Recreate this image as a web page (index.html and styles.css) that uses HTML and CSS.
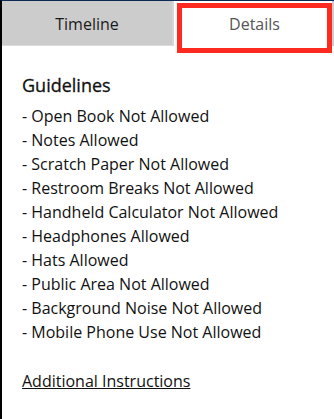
FILE: index.html
```html
<!DOCTYPE html>
<html lang="en">
<head>
    <meta charset="UTF-8">
    <meta name="viewport" content="width=device-width, initial-scale=1.0">
    <title>Exam Details</title>
    <link rel="stylesheet" href="styles.css">
</head>
<body>
    <div class="tabs">
        <div class="tab tab-timeline">Timeline</div>
        <div class="tab tab-details">Details</div>
    </div>
    <div class="details-panel">
        <h3 class="section-title">Guidelines</h3>
        <ul class="guideline-list">
            <li>- Open Book Not Allowed</li>
            <li>- Notes Allowed</li>
            <li>- Scratch Paper Not Allowed</li>
            <li>- Restroom Breaks Not Allowed</li>
            <li>- Handheld Calculator Not Allowed</li>
            <li>- Headphones Allowed</li>
            <li>- Hats Allowed</li>
            <li>- Public Area Not Allowed</li>
            <li>- Background Noise Not Allowed</li>
            <li>- Mobile Phone Use Not Allowed</li>
        </ul>
        <a class="instructions-link" href="#">Additional Instructions</a>
    </div>
</body>
</html>
```

FILE: styles.css
```css
        html, body {
            height: 100%;
        }
        body {
            margin: 0;
            border-top: 1px solid #0d2a55;
            border-left: 2px solid #000;
            box-sizing: border-box;
            background-color: #fff;
            font-family: "Open Sans", Arial, sans-serif;
            color: #111;
        }
        .tabs {
            display: flex;
            height: 45px;
            background-color: #ccc;
        }
        .tab {
            display: flex;
            align-items: center;
            justify-content: center;
            font-size: 16px;
            box-sizing: border-box;
            padding-top: 1px;
        }
        .tab-timeline {
            width: 172px;
            color: #1a1a1a;
            border-right: 2px solid #d6d6d6;
            border-bottom: 1px solid #dcdcdc;
        }
        .tab-details {
            position: relative;
            width: 158px;
            background-color: #fff;
            color: #555;
            padding-left: 3px;
        }
        .tab-details::after {
            content: "";
            position: absolute;
            left: 3px;
            top: 2px;
            right: 0;
            bottom: -7px;
            border: 5px solid #ff2a1f;
        }
        .details-panel {
            padding: 27px 20px 0 20px;
        }
        .section-title {
            margin: 0 0 7px 0;
            font-size: 18px;
            font-weight: 500;
            line-height: 24px;
            -webkit-text-stroke: 0.3px #111;
        }
        .guideline-list {
            list-style: none;
            margin: 0;
            padding: 0;
        }
        .guideline-list li {
            font-size: 16px;
            line-height: 24px;
        }
        .instructions-link {
            display: inline-block;
            margin-top: 25px;
            font-size: 16px;
            line-height: 24px;
            color: #111;
            text-decoration: underline;
        }
```
